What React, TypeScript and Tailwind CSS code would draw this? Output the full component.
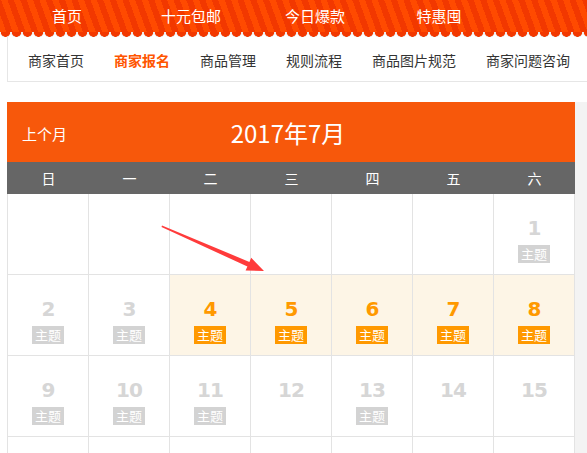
import React from 'react';

const topLinks = ['首页', '十元包邮', '今日爆款', '特惠囤'];
const navLinks = ['商家首页', '商家报名', '商品管理', '规则流程', '商品图片规范', '商家问题咨询'];
const weekdays = ['日', '一', '二', '三', '四', '五', '六'];

type Day = { n?: number; theme?: boolean; active?: boolean };

const weeks: Day[][] = [
  [{}, {}, {}, {}, {}, {}, { n: 1, theme: true }],
  [
    { n: 2, theme: true },
    { n: 3, theme: true },
    { n: 4, theme: true, active: true },
    { n: 5, theme: true, active: true },
    { n: 6, theme: true, active: true },
    { n: 7, theme: true, active: true },
    { n: 8, theme: true, active: true },
  ],
  [
    { n: 9, theme: true },
    { n: 10, theme: true },
    { n: 11, theme: true },
    { n: 12 },
    { n: 13, theme: true },
    { n: 14 },
    { n: 15 },
  ],
  // next week only peeks in at the bottom edge
  [{}, {}, {}, {}, {}, {}, {}],
];

function DayCell({ day }: { day: Day }) {
  return (
    <div
      className={`h-[81px] border-r border-b border-[#e3e3e3] flex flex-col items-center pt-[22px] ${
        day.active ? 'bg-[#fdf5e6]' : 'bg-white'
      }`}
    >
      {day.n !== undefined && (
        <span
          className={`text-[20px] leading-[24px] font-bold tracking-[-1px] ${
            day.active ? 'text-[#ff9900]' : 'text-[#d6d6d6]'
          }`}
          style={{ fontFamily: '"DejaVu Sans", Verdana, sans-serif' }}
        >
          {day.n}
        </span>
      )}
      {day.theme && (
        <span
          className={`mt-[5px] w-8 h-[18px] text-[13px] leading-[18px] text-center text-white ${
            day.active ? 'bg-[#ff9900]' : 'bg-[#d3d3d3]'
          }`}
        >
          主题
        </span>
      )}
    </div>
  );
}

export default function App() {
  return (
    <div
      className="relative w-[587px] h-[453px] overflow-hidden bg-white"
      style={{ fontFamily: '"Noto Sans CJK SC", "Liberation Sans", sans-serif' }}
    >
      {/* striped top bar */}
      <div className="h-[32px] flex items-center pl-[5px] bg-[repeating-linear-gradient(70deg,#ff4a00_0px,#ff4a00_6px,#f23800_6px,#f23800_12px)]">
        {topLinks.map((t) => (
          <a key={t} className="w-[124px] text-center text-[15px] text-white">
            {t}
          </a>
        ))}
      </div>
      {/* scalloped edge */}
      <div className="h-[5px] bg-[radial-gradient(circle_at_50%_0,#f23800_4.5px,#e8e8e8_5px,transparent_6px)] bg-[length:11px_5px]" />

      {/* sub nav */}
      <div className="ml-[7px] h-[45px] border-l border-b border-[#e6e6e6] flex items-center pl-[5px] pt-[2px]">
        {navLinks.map((t, i) => (
          <a
            key={t}
            className={`px-[15px] text-[14px] ${i === 1 ? 'text-[#ff5500] font-bold' : 'text-[#333]'}`}
          >
            {t}
          </a>
        ))}
      </div>

      <div className="flex mt-[20px]">
        {/* calendar */}
        <div className="ml-[7px] w-[568px] shrink-0">
          <div className="relative h-[60px] bg-[#f7580b] flex items-center justify-center text-white">
            <span className="absolute left-[15px] top-[21px] text-[15px]">上个月</span>
            <span className="text-[24px] pt-[1px] pr-[6px]">2017年7月</span>
          </div>
          <div className="h-[32px] bg-[#666666] grid grid-cols-[repeat(7,81px)] pl-px">
            {weekdays.map((w) => (
              <div key={w} className="flex items-center justify-center text-[14px] text-white">
                {w}
              </div>
            ))}
          </div>
          <div className="border-l border-[#e3e3e3] grid grid-cols-[repeat(7,81px)]">
            {weeks.flat().map((d, i) => (
              <DayCell key={i} day={d} />
            ))}
          </div>
        </div>
        <div className="flex-1 bg-[#f3f3f3] h-[360px]" />
      </div>

      {/* annotation arrow */}
      <svg className="absolute left-0 top-0 pointer-events-none" width="587" height="453">
        <polygon
          points="162,225.5 249.4,261.9 251.2,257.8 264,271 245.6,270.6 247.4,266.5 161.5,227"
          fill="#ff3b3b"
        />
      </svg>
    </div>
  );
}
